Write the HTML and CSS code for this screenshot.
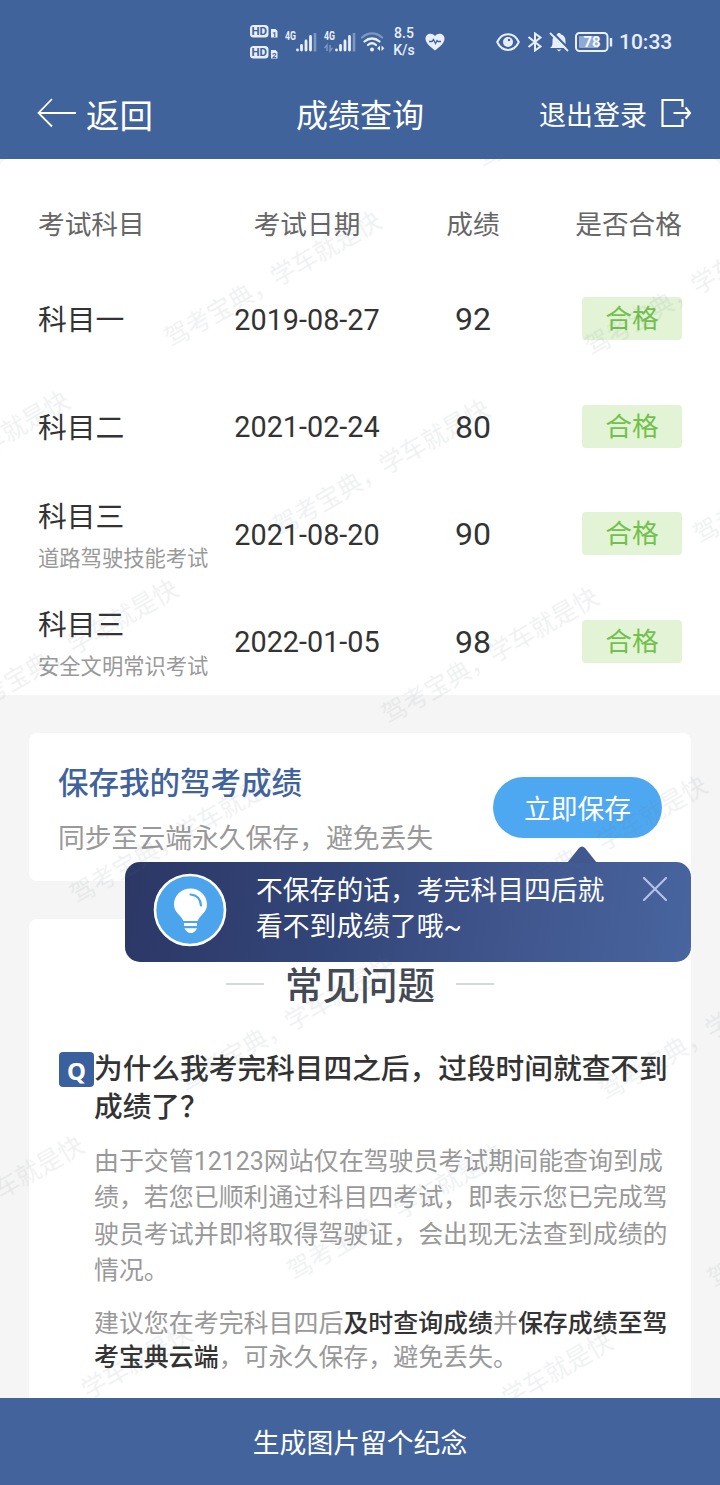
FILE: index.html
```
<!DOCTYPE html>
<html lang="zh-CN">
<head>
  <meta charset="UTF-8" />
  <meta name="viewport" content="width=device-width, initial-scale=1.0"/>
  <title>成绩查询</title>
  <link rel="stylesheet" href="styles.css">
</head>
<body>
  <header>
    <div class="status-bar">
      <svg class="hd" width="28" height="36" viewBox="0 0 28 36">
        <rect x="0" y="1" width="18.500" height="12.500" rx="3.500" fill="#e8eefa"/>
        <rect x="0" y="22" width="18.500" height="12.500" rx="3.500" fill="#e8eefa"/>
        <path d="M21 5h4.500l2 2v6.500h-6.500zM21 26h4.500l2 2v6.500h-6.500z" fill="#e8eefa"/>
        <g class="svg-bold" fill="#40639b">
          <text x="1.500" y="11.200" font-size="11.500">HD</text>
          <text x="1.500" y="32.200" font-size="11.500">HD</text>
          <text x="22" y="12.500" font-size="8">1</text>
          <text x="22" y="33.500" font-size="8">2</text>
        </g>
      </svg>
      <svg class="signal" width="32" height="22" viewBox="0 0 32 22">
        <text class="svg-bold" x="0" y="9" font-size="12" textLength="11" lengthAdjust="spacingAndGlyphs" fill="#e8eefa">4G</text>
        <path d="M12.500 19v0M16.500 14.500v4.500M21 10v9M25.500 5.500v13.500" stroke="#e8eefa" stroke-width="2.800" stroke-linecap="round"/>
        <path d="M30 2v18.500" stroke="#7d97c2" stroke-width="2.600"/>
      </svg>
      <svg class="signal" width="32" height="22" viewBox="0 0 32 22">
        <text class="svg-bold" x="0" y="9" font-size="12" textLength="11" lengthAdjust="spacingAndGlyphs" fill="#e8eefa">4G</text>
        <path d="M3 20v-6l-2.500 3M6 14v6l2.500-3" stroke="#7d97c2" stroke-width="1.500" fill="none"/>
        <path d="M12.500 19v0M16.500 14.500v4.500M21 10v9M25.500 5.500v13.500" stroke="#e8eefa" stroke-width="2.800" stroke-linecap="round"/>
        <path d="M30 2v18.500" stroke="#7d97c2" stroke-width="2.600"/>
      </svg>
      <svg class="wifi" width="24" height="22" viewBox="0 0 24 22" fill="none" stroke-width="2.300" stroke-linecap="round">
        <path d="M1 6.500c6-5.500 14-5.500 20 0" stroke="#7d97c2"/>
        <path d="M3.500 10.500c4.500-4 10.500-4 15 0M7 14c2.500-2.200 5.500-2.200 8 0" stroke="#e8eefa"/>
        <circle cx="11" cy="18.500" r="2" fill="#e8eefa"/>
        <path d="M19 14.500v5.500l-2.800-2.700zM20.500 14.500v5.500l2.800-2.700z" fill="#e8eefa"/>
      </svg>
      <div class="speed">8.5<br>K/s</div>
      <svg class="heart" width="20" height="18" viewBox="0 0 20 18">
        <path d="M10 17.500C5 13.500.5 10 .5 5.500.5 1 6.500-1 10 3c3.500-4 9.500-2 9.500 2.500 0 4.500-4.500 8-9.500 12z" fill="#e8eefa"/>
        <path d="M4 8.500h3L8.500 6.500l2 4L12 7.500l1 1H16" fill="none" stroke="#40639b" stroke-width="1.300"/>
      </svg>
      <svg class="eye" width="24" height="20" viewBox="0 0 24 20">
        <path d="M1.200 10C6-.5 18-.5 22.800 10 18 20.500 6 20.500 1.200 10z" fill="none" stroke="#e8eefa" stroke-width="2"/>
        <circle cx="12" cy="10" r="5" fill="#e8eefa"/>
        <circle cx="13" cy="8" r="1.200" fill="#40639b"/>
      </svg>
      <svg class="bluetooth" width="16" height="20" viewBox="0 0 16 20" fill="none" stroke="#e8eefa" stroke-width="2">
        <path d="M1.500 5l12 9.500L8 18.500v-17l5.500 4-12 9.500"/>
      </svg>
      <svg class="bell" width="20" height="20" viewBox="0 0 20 20">
        <path d="M1 16c2.500-2 2.500-3 2.500-7 0-4 2.500-6 4.500-6.500C8.500.5 11.500.5 12 2.500c3 .7 4.500 3 4.500 6.500 0 4 0 5 2.500 7z" fill="#e8eefa"/>
        <path d="M7.500 17.500h5l-2.500 2z" fill="#e8eefa"/>
        <path d="M2.500-.5l18 18" stroke="#40639b" stroke-width="2.200"/>
        <path d="M1 1l18 18" stroke="#e8eefa" stroke-width="1.800"/>
      </svg>
      <svg class="battery" width="38" height="20" viewBox="0 0 38 20">
        <rect x="1" y="1" width="31.500" height="18" rx="3.500" fill="none" stroke="#e8eefa" stroke-width="2"/>
        <rect x="4" y="4" width="19.500" height="12" rx="1" fill="#90a8d2"/>
        <path d="M36 6v8.500" stroke="#e8eefa" stroke-width="2.400"/>
        <text class="svg-bold" x="17" y="15.300" font-size="15" text-anchor="middle" fill="#f3f6ff">78</text>
      </svg>
      <div class="time">10:33</div>
    </div>

    <nav class="nav-bar">
      <div class="back">
        <svg width="40" height="30" viewBox="0 0 40 30" fill="none" stroke="#fff" stroke-width="1.800">
          <path d="M39 15H2M15 1L1.500 15 15 28.500"/>
        </svg>
        <span>返回</span>
      </div>
      <h1>成绩查询</h1>
      <div class="logout">
        <span>退出登录</span>
        <svg width="30" height="30" viewBox="0 0 30 30" fill="none" stroke="#fff" stroke-width="2.200">
          <path d="M21.500 9V2H1.500v26h20v-7M12.500 15h16M24.500 9.500L29 15l-4.500 5.500"/>
        </svg>
      </div>
    </nav>
  </header>

  <main>
    <section class="scores">
      <div class="row head">
        <div>考试科目</div>
        <div class="center">考试日期</div>
        <div class="center">成绩</div>
        <div class="right">是否合格</div>
      </div>
      <div class="row">
        <div class="subject">科目一</div>
        <div class="date">2019-08-27</div>
        <div class="score">92</div>
        <div class="badge">合格</div>
      </div>
      <div class="row">
        <div class="subject">科目二</div>
        <div class="date">2021-02-24</div>
        <div class="score">80</div>
        <div class="badge">合格</div>
      </div>
      <div class="row">
        <div class="subject two-lines">科目三<small>道路驾驶技能考试</small></div>
        <div class="date">2021-08-20</div>
        <div class="score">90</div>
        <div class="badge">合格</div>
      </div>
      <div class="row">
        <div class="subject two-lines">科目三<small>安全文明常识考试</small></div>
        <div class="date">2022-01-05</div>
        <div class="score">98</div>
        <div class="badge">合格</div>
      </div>
    </section>

    <section class="card save">
      <div class="save-text">
        <h2>保存我的驾考成绩</h2>
        <p>同步至云端永久保存，避免丢失</p>
      </div>
      <button>立即保存</button>

      <div class="tip">
        <svg class="arrow" width="32" height="17" viewBox="0 0 32 17">
          <path d="M1 17L13 2q3-3 6 0l12 15z" fill="#40578f"/>
        </svg>
        <svg class="bulb" width="74" height="74" viewBox="0 0 74 74">
          <circle cx="37" cy="37" r="35" fill="#4ca4ed" stroke="#fff" stroke-width="2.600"/>
          <path d="M37.500 15.500c-9.500 0-16.500 7-16.500 16 0 8 6.500 10 9.500 16.500h14c3-6.500 9.500-8.500 9.500-16.500 0-9-7-16-16.500-16z" fill="#fff"/>
          <path d="M37.500 21.500c6 .5 10 4.500 10.500 11" fill="none" stroke="#4ca4ed" stroke-width="2.200" stroke-linecap="round"/>
          <path d="M31 50h13v3h-13zM31.500 55.200h12.500q-2 4.800-6.200 4.800t-6.300-4.800z" fill="#fff"/>
        </svg>
        <p>不保存的话，考完科目四后就<br>看不到成绩了哦~</p>
        <svg class="close" width="24" height="24" viewBox="0 0 24 24">
          <path d="M1 1l22 22M23 1L1 23" stroke="#b4c2e6" stroke-width="2.200" stroke-linecap="round"/>
        </svg>
      </div>
    </section>

    <section class="card faq">
      <h2>常见问题</h2>
      <div class="question">
        <span class="q">Q</span>
        <h3>为什么我考完科目四之后，过段时间就查不到成绩了？</h3>
      </div>
      <div class="answer">
        <p>由于交管12123网站仅在驾驶员考试期间能查询到成绩，若您已顺利通过科目四考试，即表示您已完成驾驶员考试并即将取得驾驶证，会出现无法查到成绩的情况。</p>
        <p class="advice">建议您在考完科目四后<b>及时查询成绩</b>并<b>保存成绩至驾考宝典云端</b>，可永久保存，避免丢失。</p>
      </div>
    </section>

    <!-- watermark over the whole content area -->
    <svg class="watermark" width="720" height="1239">
      <defs>
        <pattern id="mark" width="360" height="217.300" patternUnits="userSpaceOnUse" patternTransform="translate(211.400 302.900) rotate(-30)">
          <text x="22" y="99" font-size="24.500">驾考宝典，学车就是快</text>
        </pattern>
      </defs>
      <rect width="720" height="1239" fill="url(#mark)"/>
    </svg>
  </main>

  <footer>生成图片留个纪念</footer>
</body>
</html>
```
FILE: styles.css
```
* {
  box-sizing: border-box;
}

body {
  margin: 0;
  height: 1485px;
  overflow: hidden;
  display: flex;
  flex-direction: column;
  font-family: Roboto, "Noto Sans CJK SC", sans-serif;
  background: #f5f5f5;
  color: #333;
}

h1, h2, h3, p {
  margin: 0;
  font-weight: 400;
}

header {
  height: 159px;
  flex-shrink: 0;
  background: #40639b;
  color: #fff;
}

/* status bar */
.status-bar {
  height: 83px;
  padding-left: 250px;
  display: flex;
  align-items: center;
  color: #e8eefa;
}

.svg-bold {
  font-family: Roboto, sans-serif;
  font-weight: 700;
}

.signal {
  margin-left: 7px;
}

.wifi {
  margin-left: 5px;
}

.speed {
  width: 24px;
  margin-left: 7px;
  font-size: 14px;
  font-weight: 500;
  line-height: 17px;
  text-align: center;
  white-space: nowrap;
}

.heart {
  margin-left: 9px;
}

.eye {
  margin-left: 51px;
}

.bluetooth {
  margin-left: 7px;
}

.bell {
  margin-left: 6px;
}

.battery {
  margin-left: 6px;
}

.time {
  margin-left: 6px;
  font-size: 21px;
  font-weight: 500;
}

/* title bar */
.nav-bar {
  height: 60px;
  padding: 0 29px 0 37px;
  display: grid;
  grid-template-columns: 152px 1fr 152px;
  align-items: center;
}

.nav-bar h1 {
  margin-right: 8px;
  font-size: 32px;
  text-align: center;
}

.back {
  display: flex;
  align-items: center;
  gap: 9px;
  font-size: 33.500px;
}

.logout {
  display: flex;
  align-items: center;
  justify-content: flex-end;
  gap: 14px;
  font-size: 27px;
  white-space: nowrap;
}

main {
  position: relative;
  flex: 1;
  min-height: 0;
  overflow: hidden;
}

/* score table */
.scores {
  height: 536px;
  padding: 0 38px;
  background: #fff;
  border-radius: 8px 8px 0 0;
}

.row {
  height: 107.500px;
  display: grid;
  grid-template-columns: 176px 186px 146px 136px;
  align-items: center;
}

.row.head {
  height: 106px;
  padding-top: 20px;
  font-size: 26.700px;
  color: #666;
}

.center,
.date,
.score {
  text-align: center;
}

.right {
  text-align: right;
}

.subject {
  padding-top: 3px;
  font-size: 28.800px;
  line-height: 42px;
}

.subject.two-lines {
  padding-top: 9px;
}

.subject small {
  display: block;
  font-size: 21.300px;
  color: #999;
}

.date {
  padding-top: 2px;
  font-size: 28.800px;
}

.score {
  padding-top: 1px;
  font-size: 32px;
}

.badge {
  justify-self: end;
  width: 100px;
  height: 43px;
  border-radius: 4px;
  background: #e2f4d5;
  color: #72c14c;
  font-size: 26.700px;
  line-height: 45px;
  text-align: center;
}

.card {
  margin: 38px 29px 0;
  background: #fff;
  border-radius: 8px;
}

/* save card */
.save {
  position: relative;
  height: 148px;
  padding: 0 29px;
  display: flex;
  align-items: center;
  justify-content: space-between;
}

.save-text {
  padding-top: 9px;
}

.save-text h2 {
  font-size: 30.500px;
  font-weight: 500;
  line-height: 54px;
  color: #40639b;
}

.save-text p {
  font-size: 26.800px;
  line-height: 56px;
  color: #999;
}

.save button {
  width: 169px;
  height: 61px;
  border: none;
  border-radius: 31px;
  background: #4ea8f1;
  color: #fff;
  font-family: inherit;
  font-size: 26.800px;
}

.tip {
  position: absolute;
  top: 129px;
  right: 0;
  z-index: 1;
  width: 566px;
  height: 100px;
  padding: 11px 24px 0 28px;
  display: flex;
  align-items: flex-start;
  border-radius: 15px;
  background: linear-gradient(100deg, #2c3765, #334679 38%, #3f548b 65%, #48659f);
}

.arrow {
  position: absolute;
  top: -16px;
  left: 441px;
}

.tip .bulb {
  margin-right: 29px;
}

.tip p {
  flex: 1;
  font-size: 26.800px;
  line-height: 36px;
  color: #fff;
  white-space: nowrap;
}

.tip .close {
  margin-top: 4px;
}

/* faq */
.faq {
  height: 520px;
  padding: 36px 20px 0 30px;
}

.faq h2 {
  display: flex;
  align-items: center;
  justify-content: center;
  gap: 21px;
  height: 54px;
  margin-right: 10px;
  font-size: 37.500px;
  font-weight: 500;
  color: #444a55;
}

.faq h2::before,
.faq h2::after {
  content: "";
  width: 38px;
  height: 2px;
  margin-top: 4px;
  background: #d5d9db;
}

.question {
  display: flex;
  margin-top: 41px;
}

.q {
  flex-shrink: 0;
  width: 35px;
  height: 35px;
  margin-top: 2px;
  border-radius: 4px;
  background: #3a609d;
  color: #fff;
  font-family: "Noto Sans", sans-serif;
  font-size: 24px;
  font-weight: 700;
  line-height: 38px;
  text-align: center;
}

.question h3 {
  width: 577px;
  font-size: 28.700px;
  font-weight: 500;
  line-height: 38px;
}

.answer {
  width: 576px;
  margin: 18px 0 0 35px;
  font-size: 24.950px;
  line-height: 36.300px;
  color: #999;
}

.answer .advice {
  margin-top: 18px;
  line-height: 34px;
}

.answer b {
  font-weight: 500;
  color: #333;
}

.watermark {
  position: absolute;
  top: 0;
  left: 0;
  z-index: 2;
  pointer-events: none;
  fill: rgba(90, 105, 120, 0.1);
}

footer {
  height: 87px;
  flex-shrink: 0;
  background: #42639b;
  color: #fff;
  font-size: 26.800px;
  line-height: 92px;
  text-align: center;
}
```
